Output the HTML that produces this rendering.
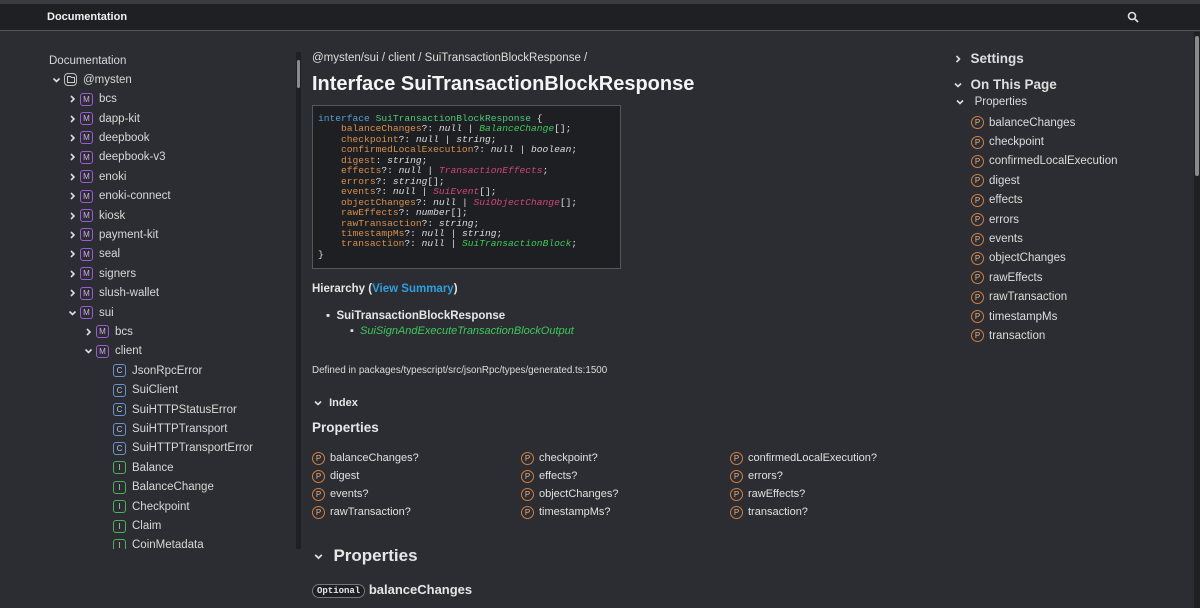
<!DOCTYPE html>
<html><head><meta charset="utf-8"><style>
*{margin:0;padding:0;box-sizing:border-box}
body{width:1200px;height:608px;overflow:hidden;background:#2b2d32;color:#e6e6e6;font-family:"Liberation Sans","Noto Sans CJK JP",sans-serif;position:relative}
.top{position:absolute;left:0;top:0;width:1200px;height:4px;background:#3a3c41}
.hdr{position:absolute;left:0;top:4px;width:1200px;height:27px;background:#1f2024;border-bottom:1px solid #55575c}
.hdr b{position:absolute;left:47px;top:7px;font-size:11px;color:#f2f2f2}
.abs{position:absolute;white-space:nowrap}
.side{position:absolute;left:49px;top:52px;width:245px;height:497px;overflow:hidden;font-size:11.5px;color:#d8d8d8}
.row{height:19.42px;display:flex;align-items:center;white-space:nowrap}
.ic{flex:none;display:flex;align-items:center;justify-content:center;width:13px;height:13px;border:1px solid;border-radius:3px;font-size:8px;margin-right:6px}
.m{border-color:#9d5bd2;color:#cfa9ee}.c{border-color:#6b8fc9;color:#b6c9ea}.i{border-color:#4fae5d;color:#9fe0a7}
.ch{flex:none;width:15px;height:10px;display:flex;align-items:center}
.p{flex:none;display:inline-flex;align-items:center;justify-content:center;width:13px;height:13px;border:1px solid #d37f3f;border-radius:50%;font-size:8px;color:#e8b38a;margin-right:5px}
.sb{position:absolute;left:296px;top:52px;width:5px;height:497px;background:#1f2024}
.code{position:absolute;left:312px;top:105px;width:309px;height:164px;background:#1e1f23;border:1px solid #55575c;font-family:"Liberation Mono",monospace;font-size:9.6px;line-height:10.46px;padding:8px 5px;white-space:pre;color:#ddd}
.k{color:#569cd6}.t{color:#4ec97a}.o{color:#d5904f}.e{font-style:italic}.r{color:#d0457c;font-style:italic}.g{color:#3ec95a;font-style:italic}
.grid div{position:absolute;font-size:11px;white-space:nowrap;color:#e0e0e0;display:flex;align-items:center;height:14px}
.toc{position:absolute;left:953px;font-size:11.5px;color:#ddd;white-space:nowrap}
.tr{display:flex;align-items:center;height:19.4px}
</style></head><body>
<svg width="0" height="0" style="position:absolute"><defs>
<symbol id="cr" viewBox="0 0 10 10"><path d="M3.5 2L6.5 5L3.5 8" stroke="#ddd" stroke-width="1.6" fill="none"/></symbol>
<symbol id="cd" viewBox="0 0 10 10"><path d="M2 3.5L5 6.5L8 3.5" stroke="#ddd" stroke-width="1.6" fill="none"/></symbol>
</defs></svg>
<div class="top"></div>
<div class="hdr"><b>Documentation</b>
<svg style="position:absolute;left:1127px;top:7px" width="12" height="12" viewBox="0 0 12 12"><circle cx="5" cy="5" r="3.5" stroke="#ddd" stroke-width="1.6" fill="none"/><path d="M7.5 7.5L11 11" stroke="#ddd" stroke-width="1.8"/></svg></div>
<div style="position:absolute;right:0;top:32px;width:6px;height:576px;background:#1f2024"></div>
<div style="position:absolute;right:1px;top:36px;width:4px;height:140px;background:#8a8b8e;border-radius:2px"></div>

<div class="side">
<div class="row" style="height:18px">Documentation</div>
<div class="row"><svg class="ch"><use href="#cd"/></svg><span class="ic" style="border-color:#bbb;color:#bbb;border-radius:4px"><svg width="8" height="7" viewBox="0 0 8 7"><path d="M0.5 0.5h3l1 1h3v5h-7z" stroke="#ccc" fill="none"/></svg></span>@mysten</div>
<div style="padding-left:16px">
<div class="row"><svg class="ch"><use href="#cr"/></svg><span class="ic m">M</span>bcs</div>
<div class="row"><svg class="ch"><use href="#cr"/></svg><span class="ic m">M</span>dapp-kit</div>
<div class="row"><svg class="ch"><use href="#cr"/></svg><span class="ic m">M</span>deepbook</div>
<div class="row"><svg class="ch"><use href="#cr"/></svg><span class="ic m">M</span>deepbook-v3</div>
<div class="row"><svg class="ch"><use href="#cr"/></svg><span class="ic m">M</span>enoki</div>
<div class="row"><svg class="ch"><use href="#cr"/></svg><span class="ic m">M</span>enoki-connect</div>
<div class="row"><svg class="ch"><use href="#cr"/></svg><span class="ic m">M</span>kiosk</div>
<div class="row"><svg class="ch"><use href="#cr"/></svg><span class="ic m">M</span>payment-kit</div>
<div class="row"><svg class="ch"><use href="#cr"/></svg><span class="ic m">M</span>seal</div>
<div class="row"><svg class="ch"><use href="#cr"/></svg><span class="ic m">M</span>signers</div>
<div class="row"><svg class="ch"><use href="#cr"/></svg><span class="ic m">M</span>slush-wallet</div>
<div class="row"><svg class="ch"><use href="#cd"/></svg><span class="ic m">M</span>sui</div>
<div style="padding-left:16px">
<div class="row"><svg class="ch"><use href="#cr"/></svg><span class="ic m">M</span>bcs</div>
<div class="row"><svg class="ch"><use href="#cd"/></svg><span class="ic m">M</span>client</div>
<div style="padding-left:32px">
<div class="row"><span class="ic c">C</span>JsonRpcError</div>
<div class="row"><span class="ic c">C</span>SuiClient</div>
<div class="row"><span class="ic c">C</span>SuiHTTPStatusError</div>
<div class="row"><span class="ic c">C</span>SuiHTTPTransport</div>
<div class="row"><span class="ic c">C</span>SuiHTTPTransportError</div>
<div class="row"><span class="ic i">I</span>Balance</div>
<div class="row"><span class="ic i">I</span>BalanceChange</div>
<div class="row"><span class="ic i">I</span>Checkpoint</div>
<div class="row"><span class="ic i">I</span>Claim</div>
<div class="row"><span class="ic i">I</span>CoinMetadata</div>
</div></div></div></div>
<div class="sb"><div style="margin:8px 0 0 1px;width:3px;height:28px;background:#8a8b8e;border-radius:2px"></div></div>

<div class="abs" style="left:312px;top:52px;font-size:11.5px;color:#ddd">@mysten/sui / client / SuiTransactionBlockResponse /</div>
<div class="abs" style="left:312px;top:73px;font-size:20px;font-weight:bold;color:#f4f4f4">Interface SuiTransactionBlockResponse</div>
<div class="code"><span class="k">interface</span> <span class="t">SuiTransactionBlockResponse</span> {
    <span class="o">balanceChanges</span>?: <span class="e">null</span> | <span class="g">BalanceChange</span>[];
    <span class="o">checkpoint</span>?: <span class="e">null</span> | <span class="e">string</span>;
    <span class="o">confirmedLocalExecution</span>?: <span class="e">null</span> | <span class="e">boolean</span>;
    <span class="o">digest</span>: <span class="e">string</span>;
    <span class="o">effects</span>?: <span class="e">null</span> | <span class="r">TransactionEffects</span>;
    <span class="o">errors</span>?: <span class="e">string</span>[];
    <span class="o">events</span>?: <span class="e">null</span> | <span class="r">SuiEvent</span>[];
    <span class="o">objectChanges</span>?: <span class="e">null</span> | <span class="r">SuiObjectChange</span>[];
    <span class="o">rawEffects</span>?: <span class="e">number</span>[];
    <span class="o">rawTransaction</span>?: <span class="e">string</span>;
    <span class="o">timestampMs</span>?: <span class="e">null</span> | <span class="e">string</span>;
    <span class="o">transaction</span>?: <span class="e">null</span> | <span class="g">SuiTransactionBlock</span>;
}</div>
<div class="abs" style="left:312px;top:283px;font-size:11.5px;font-weight:bold">Hierarchy (<span style="color:#2f9fe0">View Summary</span>)</div>
<div class="abs" style="left:326px;top:310px;font-size:11.5px;font-weight:bold">▪&nbsp; SuiTransactionBlockResponse</div>
<div class="abs" style="left:350px;top:325px;font-size:11px;color:#3ec95a;font-style:italic"><span style="color:#ddd;font-style:normal">▪</span>&nbsp; SuiSignAndExecuteTransactionBlockOutput</div>
<div class="abs" style="left:312px;top:365px;font-size:9.8px;color:#ddd">Defined in packages/typescript/src/jsonRpc/types/generated.ts:1500</div>
<div class="abs" style="left:313px;top:397px;font-size:11px;font-weight:bold;display:flex;align-items:center"><svg width="10" height="10"><use href="#cd"/></svg>&nbsp;&nbsp;Index</div>
<div class="abs" style="left:312px;top:420px;font-size:13.5px;font-weight:bold">Properties</div>
<div class="grid">
<div style="left:312px;top:451px"><span class="p">P</span>balanceChanges?</div>
<div style="left:521px;top:451px"><span class="p">P</span>checkpoint?</div>
<div style="left:730px;top:451px"><span class="p">P</span>confirmedLocalExecution?</div>
<div style="left:312px;top:469px"><span class="p">P</span>digest</div>
<div style="left:521px;top:469px"><span class="p">P</span>effects?</div>
<div style="left:730px;top:469px"><span class="p">P</span>errors?</div>
<div style="left:312px;top:487px"><span class="p">P</span>events?</div>
<div style="left:521px;top:487px"><span class="p">P</span>objectChanges?</div>
<div style="left:730px;top:487px"><span class="p">P</span>rawEffects?</div>
<div style="left:312px;top:505px"><span class="p">P</span>rawTransaction?</div>
<div style="left:521px;top:505px"><span class="p">P</span>timestampMs?</div>
<div style="left:730px;top:505px"><span class="p">P</span>transaction?</div>
</div>
<div class="abs" style="left:313px;top:546px;font-size:17px;font-weight:bold;display:flex;align-items:center"><svg width="11" height="11" viewBox="0 0 10 10"><use href="#cd"/></svg>&nbsp;&nbsp;Properties</div>
<div class="abs" style="left:312px;top:582px;font-size:13px;font-weight:bold"><span style="display:inline-block;border:1px solid #777;border-radius:8px;padding:1px 4px;font-family:'Liberation Mono',monospace;font-size:9px;background:#1e1f23;vertical-align:1px">Optional</span> balanceChanges</div>

<div class="toc" style="top:51px;font-size:13.5px;font-weight:bold;display:flex;align-items:center"><svg width="10" height="10"><use href="#cr"/></svg>&nbsp;&nbsp;Settings</div>
<div class="toc" style="top:77px;font-size:13.5px;font-weight:bold;display:flex;align-items:center"><svg width="10" height="10"><use href="#cd"/></svg>&nbsp;&nbsp;On This Page</div>
<div class="toc" style="top:96px;left:955px;display:flex;align-items:center"><svg width="10" height="10"><use href="#cd"/></svg>&nbsp;&nbsp;&nbsp;Properties</div>
<div class="toc" style="top:113px;left:971px">
<div class="tr"><span class="p">P</span>balanceChanges</div><div class="tr"><span class="p">P</span>checkpoint</div><div class="tr"><span class="p">P</span>confirmedLocalExecution</div><div class="tr"><span class="p">P</span>digest</div><div class="tr"><span class="p">P</span>effects</div><div class="tr"><span class="p">P</span>errors</div><div class="tr"><span class="p">P</span>events</div><div class="tr"><span class="p">P</span>objectChanges</div><div class="tr"><span class="p">P</span>rawEffects</div><div class="tr"><span class="p">P</span>rawTransaction</div><div class="tr"><span class="p">P</span>timestampMs</div><div class="tr"><span class="p">P</span>transaction</div>
</div>
</body></html>
